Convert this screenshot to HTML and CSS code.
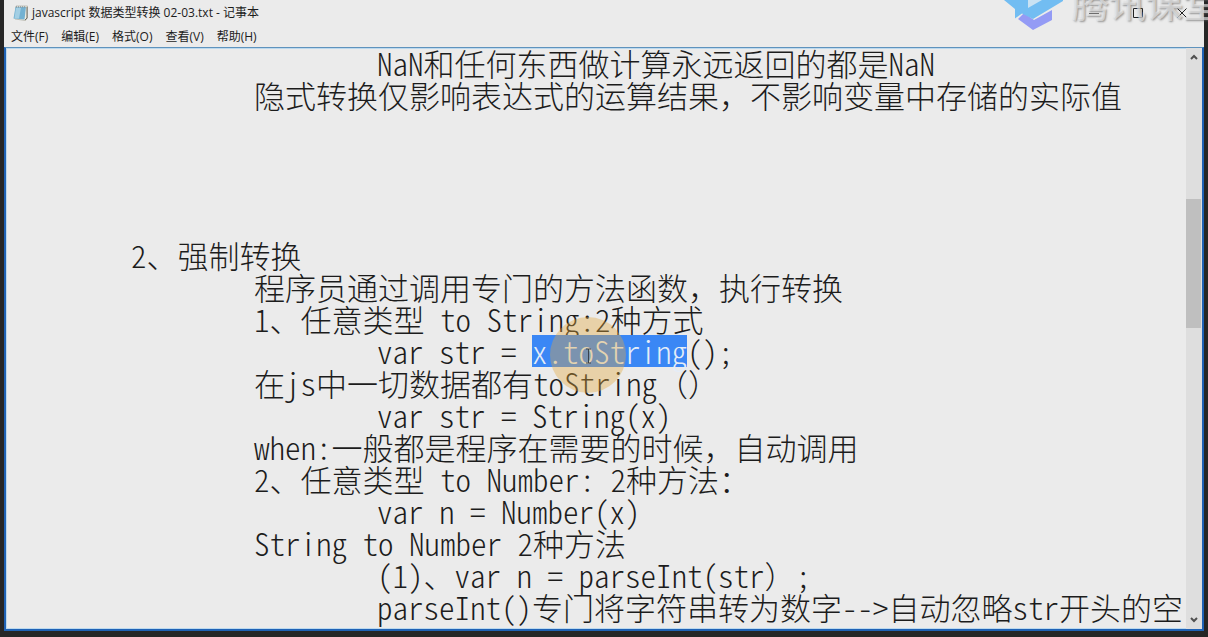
FILE: index.html
```html
<!DOCTYPE html>
<html lang="zh-CN">
<head>
<meta charset="utf-8">
<title>javascript 数据类型转换 02-03.txt - 记事本</title>
<link rel="stylesheet" href="styles.css">
</head>
<body>
<div class="window">
  <header class="titlebar">
    <svg class="app-icon" viewBox="0 0 16 16" aria-hidden="true">
      <path d="M3 1h11.500v12l-2 2.500L2 14z" fill="#f0ede0" stroke="#a09f94" stroke-width=".6"/>
      <path d="M14 2v11l-2 2" fill="none" stroke="#6f6d66"/>
      <path d="M2.500 2h10.500l-1.500 12.500L.5 13.500z" fill="#74b2d2"/>
      <path d="M3 2.500h5L6 13.500H1.500z" fill="#a3cfe4"/>
      <path d="M3.500 1v2M5.500 1v2M7.500 1v2M9.500 1v2M11.500 1v2" stroke="#8b9aa2" stroke-width=".8"/>
    </svg>
    <h1 class="title">javascript 数据类型转换 02-03.txt - 记事本</h1>
    <div class="controls">
      <button class="control" aria-label="最小化"><svg viewBox="0 0 10 10"><path d="M0 5.500h10"/></svg></button>
      <button class="control" aria-label="最大化"><svg viewBox="0 0 10 10"><path d="M.5.5h9v9h-9z"/></svg></button>
      <button class="control" aria-label="关闭"><svg viewBox="0 0 10 10"><path d="M.5.5l9 9M9.500.5l-9 9"/></svg></button>
    </div>
  </header>
  <nav class="menubar">
    <button class="menu">文件(F)</button>
    <button class="menu">编辑(E)</button>
    <button class="menu">格式(O)</button>
    <button class="menu">查看(V)</button>
    <button class="menu">帮助(H)</button>
  </nav>
  <main class="editor">
<pre class="document">			<span class="latin">NaN</span>和任何东西做计算永远返回的都是<span class="latin">NaN</span>
		隐式转换仅影响表达式的运算结果，不影响变量中存储的实际值




	<span class="latin">2</span>、强制转换
		程序员通过调用专门的方法函数，执行转换
		<span class="latin">1</span>、任意类型<span class="latin"> to String:2</span>种方式
			<span class="latin">var str = <mark class="selection">x.toString<svg class="pointer" viewBox="0 0 76 76" aria-hidden="true"><circle cx="38" cy="38" r="38" fill="#e6a93c" fill-opacity=".38"/><path d="M36 32h2.500M41 32h-2.500v14M36 46h5" fill="none" stroke="#39424c"/></svg></mark>();</span>
		在<span class="latin">js</span>中一切数据都有<span class="latin">toString</span>（）
			<span class="latin">var str = String(x)</span>
		<span class="latin">when:</span>一般都是程序在需要的时候，自动调用
		<span class="latin">2</span>、任意类型<span class="latin"> to Number: 2</span>种方法：
			<span class="latin">var n = Number(x)</span>
		<span class="latin">String to Number 2</span>种方法
			<span class="latin">(1)</span>、<span class="latin">var n = parseInt(str</span>）<span class="latin">;</span>
			<span class="latin">parseInt()</span>专门将字符串转为数字<span class="latin">--&gt;</span>自动忽略<span class="latin">str</span>开头的空</pre>
    <div class="scrollbar">
      <button class="arrow" aria-label="向上滚动"><svg viewBox="0 0 8 6"><path d="M1 5l3-3 3 3"/></svg></button>
      <div class="track"><div class="thumb"></div></div>
      <button class="arrow" aria-label="向下滚动"><svg viewBox="0 0 8 6"><path d="M1 1l3 3 3-3"/></svg></button>
    </div>
  </main>
</div>
<div class="watermark">
  <svg class="watermark-logo" viewBox="0 0 60 30" aria-hidden="true">
    <path d="M14 19l6-6 10 7 18-10v10L29 30z" fill="#949bf5"/>
    <path d="M0 0h59v1L29 19l-11-5.500-7 5V9z" fill="#72bdf2"/>
    <path d="M24 0h14l-14 8z" fill="#c9e2f3"/>
  </svg>
  <span class="watermark-text">腾讯课堂</span>
</div>
</body>
</html>
```
FILE: styles.css
```css
* {
  box-sizing: border-box;
}

body {
  margin: 0;
  height: 100vh;
  padding: 0 4px 6px 4px;
  overflow: hidden;
  position: relative;
  background: #262626;
  color: #1c1c1c;
  font-family: "Open Sans", "Noto Sans CJK SC", sans-serif;
}

button {
  margin: 0;
  padding: 0;
  border: 0;
  background: none;
  color: inherit;
  font: inherit;
}

.window {
  height: 100%;
  display: flex;
  flex-direction: column;
  background: #ebebeb;
}

.titlebar {
  height: 25px;
  flex: none;
  display: flex;
  align-items: center;
  padding-left: 9px;
}

.app-icon {
  width: 16px;
  height: 16px;
}

.title {
  flex: 1;
  margin: 0 0 0 3px;
  font-size: 12px;
  line-height: 16px;
  font-weight: 400;
}

.controls {
  display: flex;
}

.control {
  width: 44px;
  height: 25px;
  display: grid;
  place-items: center;
}

.control svg {
  width: 10px;
  height: 10px;
  fill: none;
  stroke: #222;
}

.menubar {
  height: 22px;
  flex: none;
  display: flex;
  gap: 13px;
  padding-left: 7px;
}

.menu {
  height: 22px;
  font-size: 12px;
  line-height: 24px;
}

.editor {
  flex: 1;
  min-height: 0;
  display: flex;
  border: 2px solid #1f62b5;
  border-top: 1px solid #5f93bd;
  box-shadow: inset 0 0 0 1px #bcd9ee;
}

.document {
  flex: 1;
  min-width: 0;
  margin: -1px 0 0;
  padding-left: 2px;
  overflow: hidden;
  tab-size: 123px;
  font-family: "Noto Sans CJK SC", sans-serif;
  font-size: 31px;
  font-weight: 300;
  line-height: 32px;
}

.latin {
  font-feature-settings: "hwid";
}

.selection {
  display: inline-block;
  height: 32px;
  vertical-align: top;
  position: relative;
  background: #3a87f5;
  color: #e4edf8;
}

.pointer {
  position: absolute;
  left: 18px;
  top: -18px;
  width: 76px;
  height: 76px;
}

.scrollbar {
  width: 16px;
  flex: none;
  display: flex;
  flex-direction: column;
  background: #dedede;
}

.arrow {
  height: 18px;
  display: grid;
  place-items: center;
}

.arrow svg {
  width: 8px;
  height: 6px;
  fill: none;
  stroke: #505050;
  stroke-width: 2;
}

.track {
  flex: 1;
  display: grid;
  grid-template-rows: 133fr 128fr 282fr;
}

.thumb {
  grid-row: 2;
  margin-right: 1px;
  background: #bfbfbf;
}

.watermark {
  position: absolute;
  top: 0;
  right: 0;
  width: 204px;
  height: 32px;
  display: flex;
  gap: 8px;
  overflow: hidden;
  pointer-events: none;
}

.watermark-logo {
  width: 60px;
  height: 30px;
  flex: none;
}

.watermark-text {
  margin-top: -16px;
  color: rgba(240, 240, 240, .6);
  font-size: 37px;
  line-height: 40px;
  font-weight: 500;
  white-space: nowrap;
  text-shadow: 1px 1px 2px rgba(90, 90, 90, .6);
}
```
